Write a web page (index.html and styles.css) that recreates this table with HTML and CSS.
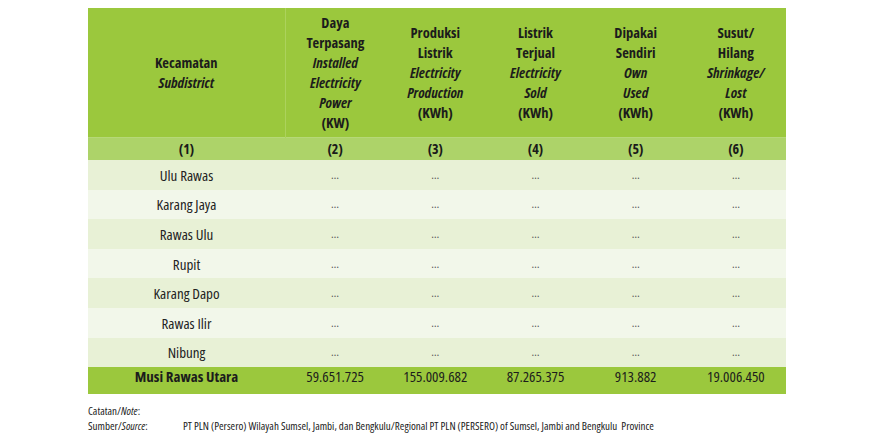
FILE: index.html
```html
<!DOCTYPE html>
<html lang="id">
<head>
<meta charset="utf-8">
<title>Listrik Musi Rawas Utara</title>
<link rel="stylesheet" href="styles.css">
</head>
<body>
<div class="page">
  <table class="tbl">
    <colgroup>
      <col class="c1"><col class="cn"><col class="cn"><col class="cn"><col class="cn"><col class="cn">
    </colgroup>
    <thead>
      <tr class="head">
        <th class="first"><span class="ln">Kecamatan</span><span class="ln it">Subdistrict</span></th>
        <th><span class="ln">Daya</span><span class="ln">Terpasang</span><span class="ln it">Installed</span><span class="ln it">Electricity</span><span class="ln it">Power</span><span class="ln">(KW)</span></th>
        <th><span class="ln">Produksi</span><span class="ln">Listrik</span><span class="ln it">Electricity</span><span class="ln it">Production</span><span class="ln">(KWh)</span></th>
        <th><span class="ln">Listrik</span><span class="ln">Terjual</span><span class="ln it">Electricity</span><span class="ln it">Sold</span><span class="ln">(KWh)</span></th>
        <th><span class="ln">Dipakai</span><span class="ln">Sendiri</span><span class="ln it">Own</span><span class="ln it">Used</span><span class="ln">(KWh)</span></th>
        <th><span class="ln">Susut/</span><span class="ln">Hilang</span><span class="ln it">Shrinkage/</span><span class="ln it">Lost</span><span class="ln">(KWh)</span></th>
      </tr>
      <tr class="nums">
        <th>(1)</th><th>(2)</th><th>(3)</th><th>(4)</th><th>(5)</th><th>(6)</th>
      </tr>
    </thead>
    <tbody>
      <tr class="odd"><td>Ulu Rawas</td><td>…</td><td>…</td><td>…</td><td>…</td><td>…</td></tr>
      <tr class="even"><td>Karang Jaya</td><td>…</td><td>…</td><td>…</td><td>…</td><td>…</td></tr>
      <tr class="odd"><td>Rawas Ulu</td><td>…</td><td>…</td><td>…</td><td>…</td><td>…</td></tr>
      <tr class="even"><td>Rupit</td><td>…</td><td>…</td><td>…</td><td>…</td><td>…</td></tr>
      <tr class="odd"><td>Karang Dapo</td><td>…</td><td>…</td><td>…</td><td>…</td><td>…</td></tr>
      <tr class="even"><td>Rawas Ilir</td><td>…</td><td>…</td><td>…</td><td>…</td><td>…</td></tr>
      <tr class="odd"><td>Nibung</td><td>…</td><td>…</td><td>…</td><td>…</td><td>…</td></tr>
    </tbody>
    <tfoot>
      <tr class="total">
        <td class="name">Musi Rawas Utara</td>
        <td>59.651.725</td><td>155.009.682</td><td>87.265.375</td><td>913.882</td><td>19.006.450</td>
      </tr>
    </tfoot>
  </table>
  <div class="notes">
    <div class="note">Catatan/<i>Note</i>:</div>
    <div class="note src"><span class="lbl">Sumber/<i>Source</i>:</span><span>PT PLN (Persero) Wilayah Sumsel, Jambi, dan Bengkulu/Regional PT PLN (PERSERO) of Sumsel, Jambi and Bengkulu&nbsp; Province</span></div>
  </div>
</div>
</body>
</html>
```

FILE: styles.css
```css
html, body {
  margin: 0;
  padding: 0;
  background: #ffffff;
}
body {
  font-family: "Open Sans", "Roboto", "Liberation Sans", sans-serif;
  font-stretch: 75%;
  color: #1a1a1a;
}
.page {
  padding: 8px 0 0 88px;
}
.tbl {
  border-collapse: collapse;
  table-layout: fixed;
  width: 698px;
}
.c1 { width: 197px; }
.cn { width: 100.2px; }
.tbl th, .tbl td {
  padding: 0;
  text-align: center;
  vertical-align: middle;
}
.head {
  height: 129px;
}
.head th {
  background: #9bc83d;
  padding-top: 1px;
  font-size: 14.5px;
  line-height: 20px;
  font-weight: bold;
  color: #1c1c1c;
}
.ln {
  display: block;
  height: 20px;
}
.it {
  font-style: italic;
}
.head th.first {
  border-right: 1px solid #acd25c;
}
.nums {
  height: 23px;
}
.nums th {
  background: #add369;
  font-size: 14px;
  font-weight: bold;
  border-top: 1px solid #b6d878;
}
tbody tr {
  height: 29.6px;
}
tbody td {
  vertical-align: top;
  padding-top: 0;
  font-size: 15px;
  line-height: 16px;
  color: #222;
}
tbody td + td {
  font-size: 12px;
  color: #555;
}
.odd td { background: #e8f1d6; }
.even td { background: #f2f7ea; }
.total {
  height: 27px;
}
.total td {
  background: #9bc83d;
  vertical-align: top;
  padding-top: 0;
  font-size: 15px;
  line-height: 19px;
  color: #1c1c1c;
}
.total td.name {
  font-weight: bold;
}
.notes {
  padding-top: 9px;
  font-size: 11px;
  line-height: 15px;
  color: #1a1a1a;
}
.src {
  display: flex;
}
.lbl {
  width: 95px;
}
```
